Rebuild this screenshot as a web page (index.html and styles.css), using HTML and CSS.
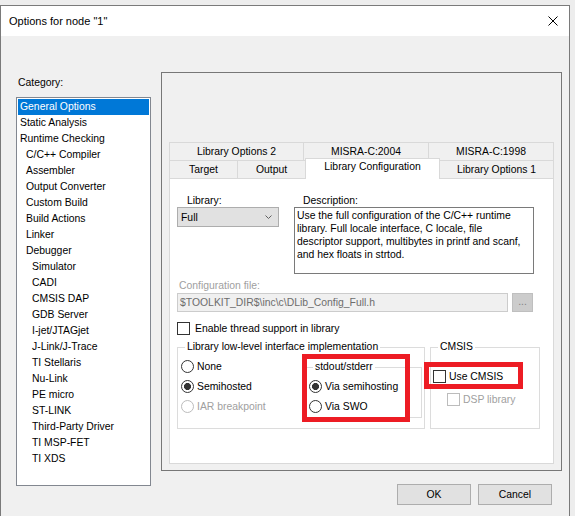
FILE: index.html
```html
<!DOCTYPE html>
<html lang="en">
<head>
  <meta charset="UTF-8" />
  <title>Options for node "1"</title>
  <link rel="stylesheet" href="styles.css">
</head>
<body>

  <div class="window">
    <div class="titlebar">
      <span class="title">Options for node "1"</span>
      <svg class="close" width="10" height="10" viewBox="0 0 10 10">
        <path d="M0.5 0.5 L9.5 9.5 M9.5 0.5 L0.5 9.5" stroke="#000" stroke-width="1" fill="none" />
      </svg>
    </div>

    <div class="client">
      <div class="category">
        <div class="category-label">Category:</div>
        <ul class="category-list">
          <li class="selected">General Options</li>
          <li>Static Analysis</li>
          <li>Runtime Checking</li>
          <li class="l1">C/C++ Compiler</li>
          <li class="l1">Assembler</li>
          <li class="l1">Output Converter</li>
          <li class="l1">Custom Build</li>
          <li class="l1">Build Actions</li>
          <li class="l1">Linker</li>
          <li class="l1">Debugger</li>
          <li class="l2">Simulator</li>
          <li class="l2">CADI</li>
          <li class="l2">CMSIS DAP</li>
          <li class="l2">GDB Server</li>
          <li class="l2">I-jet/JTAGjet</li>
          <li class="l2">J-Link/J-Trace</li>
          <li class="l2">TI Stellaris</li>
          <li class="l2">Nu-Link</li>
          <li class="l2">PE micro</li>
          <li class="l2">ST-LINK</li>
          <li class="l2">Third-Party Driver</li>
          <li class="l2">TI MSP-FET</li>
          <li class="l2">TI XDS</li>
        </ul>
      </div>

      <div class="right">
        <div class="options-frame">
          <div class="tab-row">
            <div class="tab w134">Library Options 2</div>
            <div class="tab w125">MISRA-C:2004</div>
            <div class="tab w126 last">MISRA-C:1998</div>
          </div>
          <div class="tab-row">
            <div class="tab w68">Target</div>
            <div class="tab w68">Output</div>
            <div class="tab w135 active">Library Configuration</div>
            <div class="tab w114 last">Library Options 1</div>
          </div>

          <div class="tab-panel">
            <div class="top-row">
              <div class="lib-col">
                <div class="field-label lib-label">Library:</div>
                <div class="combo">
                  <span>Full</span>
                  <svg width="7" height="4" viewBox="0 0 7 4">
                    <path d="M0.5 0.5 L3.5 3.5 L6.5 0.5" stroke="#606060" stroke-width="1" fill="none" />
                  </svg>
                </div>
              </div>
              <div class="desc-col">
                <div class="field-label desc-label">Description:</div>
                <div class="desc-box">
                  Use the full configuration of the C/C++ runtime<br>
                  library. Full locale interface, C locale, file<br>
                  descriptor support, multibytes in printf and scanf,<br>
                  and hex floats in strtod.
                </div>
              </div>
            </div>

            <div class="field-label config-label">Configuration file:</div>
            <div class="config-row">
              <div class="config-input">$TOOLKIT_DIR$\inc\c\DLib_Config_Full.h</div>
              <div class="browse-btn">...</div>
            </div>

            <div class="check-row thread-row">
              <span class="check"></span>
              <span class="check-text">Enable thread support in library</span>
            </div>

            <div class="groups">
              <fieldset class="group lowlevel">
                <legend>Library low-level interface implementation</legend>
                <div class="lowlevel-body">
                  <div class="radio-col">
                    <div class="radio-row"><span class="radio"></span><span class="radio-text">None</span></div>
                    <div class="radio-row"><span class="radio checked"></span><span class="radio-text">Semihosted</span></div>
                    <div class="radio-row disabled"><span class="radio"></span><span class="radio-text">IAR breakpoint</span></div>
                  </div>
                  <fieldset class="group stdout">
                    <legend>stdout/stderr</legend>
                    <div class="radio-row"><span class="radio checked"></span><span class="radio-text">Via semihosting</span></div>
                    <div class="radio-row"><span class="radio"></span><span class="radio-text">Via SWO</span></div>
                  </fieldset>
                </div>
              </fieldset>

              <fieldset class="group cmsis">
                <legend>CMSIS</legend>
                <div class="check-row cmsis-row">
                  <span class="check"></span>
                  <span class="check-text">Use CMSIS</span>
                </div>
                <div class="check-row dsp-row disabled">
                  <span class="check"></span>
                  <span class="check-text">DSP library</span>
                </div>
              </fieldset>

              <!-- red markup boxes drawn over the screenshot -->
              <div class="markup markup-stdout"></div>
              <div class="markup markup-cmsis"></div>
            </div>
          </div>
        </div>

        <div class="buttons">
          <button class="btn">OK</button>
          <button class="btn">Cancel</button>
        </div>
      </div>
    </div>
  </div>

</body>
</html>
```

FILE: styles.css
```css
* { box-sizing: border-box; }
body {
  margin: 0; padding-top: 5px; background: #ededed;
  font-family: 'Liberation Sans', Arial, sans-serif; font-size: 10.4px; color: #000;
}

.window {
  width: 570px; height: 511px; background: #f0f0f0;
  border: 1px solid #7a7a7a; border-bottom: none; overflow: hidden;
}

.titlebar {
  height: 30px; background: #fff; display: flex; align-items: center;
  justify-content: space-between; padding: 0 11px 0 8px;
}
.title { font-size: 11px; line-height: 14px; }
.close { display: block; }

.client { display: flex; }

/* category list */
.category { margin-left: 15px; width: 135px; }
.category-label { margin-top: 40px; line-height: 13px; padding-left: 2px; }
.category-list {
  list-style: none; margin: 8px 0 0; padding: 1px; height: 389px;
  background: #fff; border: 1px solid #828790;
}
.category-list li { line-height: 16px; padding-left: 2px; white-space: nowrap; }
.category-list li.l1 { padding-left: 8px; }
.category-list li.l2 { padding-left: 14px; }
.category-list li.selected { background: #0078d7; color: #fff; }

/* right side */
.right { margin-left: 10px; width: 401px; }
.options-frame {
  margin-top: 36px; width: 401px; height: 399px; border: 1px solid #777;
  padding: 69px 7px 6px 7px; display: flex; flex-direction: column;
}

.tab-row { display: flex; height: 18px; }
.tab {
  height: 18px; border: 1px solid #d9d9d9; border-bottom: none; border-right: none;
  text-align: center; line-height: 16px; padding-top: 1px; white-space: nowrap;
  background: #f0f0f0;
}
.tab.last { border-right: 1px solid #d9d9d9; }
.tab.active {
  position: relative; z-index: 1; background: #fff; height: 21px;
  margin-top: -2px; padding-top: 0; border-right: 1px solid #d9d9d9;
}
.tab.active + .tab { border-left: none; }
.w68 { width: 68px; }
.w114 { width: 114px; }
.w125 { width: 125px; }
.w126 { width: 126px; }
.w134 { width: 134px; }
.w135 { width: 135px; }

.tab-panel {
  flex: 1; background: #fff; border: 1px solid #d9d9d9; padding: 15px 0 0 7px;
}

.top-row { display: flex; }
.lib-col { width: 102px; margin-right: 15px; }
.desc-col { width: 240px; }
.field-label { line-height: 13px; }
.lib-label { padding-left: 10px; }
.desc-label { padding-left: 9px; }

.combo {
  width: 102px; height: 20px; background: #e1e1e1; border: 1px solid #adadad;
  display: flex; align-items: center; justify-content: space-between;
  padding: 0 6px 0 3px; line-height: 13px;
}
.combo svg { display: block; }

.desc-box {
  width: 240px; height: 67px; border: 1px solid #7a7a7a; padding: 1px 2px;
  line-height: 13px; white-space: nowrap;
}

.config-label { margin-top: 5px; padding-left: 2px; color: #a0a0a0; }
.config-row { display: flex; margin-top: 1px; }
.config-input {
  width: 331px; height: 19px; background: #f0f0f0; border: 1px solid #cccccc;
  padding-left: 2px; line-height: 17px; color: #6d6d6d; white-space: nowrap;
}
.browse-btn {
  width: 21px; height: 19px; margin-left: 4px; background: #cccccc;
  border: 1px solid #bfbfbf; color: #838383; text-align: center; line-height: 15px;
}

.check-row { display: flex; align-items: center; }
.check { width: 13px; height: 13px; border: 1px solid #333; background: #fff; flex: none; }
.check-text { margin-left: 5px; line-height: 13px; white-space: nowrap; }
.check-row.disabled .check { border-color: #bcbcbc; }
.check-row.disabled .check-text { color: #a0a0a0; }
.thread-row { margin-top: 10px; height: 13px; }

/* group boxes */
.groups { display: flex; margin-top: 5px; position: relative; align-items: flex-start; }
.group { margin: 0; min-width: 0; border: 1px solid #dcdcdc; }
.group legend { padding: 0 2px; line-height: 14px; white-space: nowrap; }

.lowlevel { width: 248px; padding: 2px 0 10px 3px; }
.lowlevel legend { margin-left: 4px; }
.lowlevel-body { display: flex; align-items: flex-start; }
.radio-col { width: 125px; }

.radio-row { display: flex; align-items: center; height: 20px; }
.radio {
  width: 13px; height: 13px; border: 1px solid #333; border-radius: 50%;
  background: #fff; flex: none;
}
.radio.checked { background: radial-gradient(circle, #333 3.2px, #fff 3.8px); }
.radio-text { margin-left: 3px; white-space: nowrap; }
.radio-row.disabled .radio { border-color: #bcbcbc; }
.radio-row.disabled .radio-text { color: #a0a0a0; }

.stdout { width: 116px; margin-top: 4px; padding: 2px 0 1px 2px; }
.stdout legend { margin-left: 4px; }

.cmsis { width: 110px; margin-left: 5px; padding: 12px 0 19px 2px; }
.cmsis legend { margin-left: 5px; }
.cmsis-row { height: 20px; }
.cmsis-row .check-text { margin-left: 3px; }
.dsp-row { height: 20px; margin-top: 3px; padding-left: 14px; }
.dsp-row .check-text { margin-left: 3px; }

.markup { position: absolute; border: 5px solid #ed1c24; pointer-events: none; }
.markup-stdout { left: 125px; top: 14px; width: 108px; height: 68px; }
.markup-cmsis { left: 247px; top: 22px; width: 99px; height: 27px; }

/* dialog buttons */
.buttons { display: flex; justify-content: flex-end; gap: 7px; margin-top: 13px; padding-right: 10px; }
.btn {
  width: 74px; height: 21px; background: #e1e1e1; border: 1px solid #adadad;
  font-family: inherit; font-size: 10.4px; color: #000; padding: 0;
}
```
